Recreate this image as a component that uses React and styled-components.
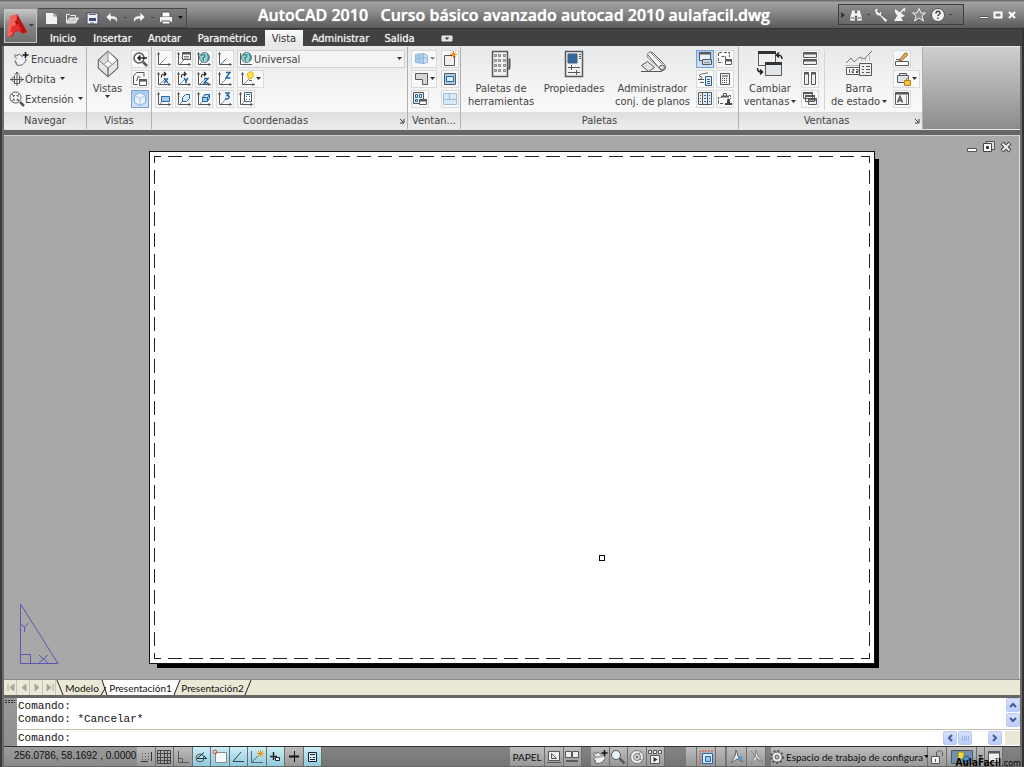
import React from "react";
import styled, { createGlobalStyle, css } from "styled-components";

const ui = '"DejaVu Sans Condensed", "Noto Sans", sans-serif';
const small = 'Lato, "Liberation Sans", sans-serif';

const Global = createGlobalStyle`
  * { box-sizing: border-box; }
  body { margin: 0; background: #5f5f5f; font-family: ${ui}; font-size: 11px; color: #444; }
  button, input, select { font: inherit; color: inherit; margin: 0; padding: 0; border: 0; background: none; }
  svg { display: block; flex: none; }
`;

const Window = styled.div`
  min-height: 100vh;
  display: flex;
  flex-direction: column;
  padding: 0 4px 1px;
  background: linear-gradient(90deg, #3c3c3c 0 2px, #6c6c6c 2px 4px, transparent 4px calc(100% - 4px), #6c6c6c calc(100% - 4px) calc(100% - 2px), #333 calc(100% - 2px)), #666764;
`;

/* ---------- title bar ---------- */
const TitleBar = styled.header`
  display: flex;
  align-items: center;
  height: 29px;
  margin: 0 -4px;
  padding: 0 6px 0 38px;
  background: linear-gradient(#5e5e5e, #a2a2a2 8%, #8b8b8b 40%, #5b5b5b 95%, #1f1f1f);
`;
const QuickAccess = styled.nav`
  display: flex;
  align-items: center;
  gap: 4px;
  width: 149px;
  height: 20px;
  margin-top: 6px;
  padding-left: 6px;
  border: 1px solid #484848;
  border-left: 0;
  background: linear-gradient(#7c7c7c, #626262);
`;
const BarButton = styled.button`
  display: flex;
  align-items: center;
  justify-content: center;
  width: ${(p) => p.$w || 16}px;
  height: 16px;
`;
const Title = styled.h1`
  flex: 1;
  margin: 0;
  padding-left: 71px;
  font: 600 16px/28px "Open Sans", sans-serif;
  color: #fff;
  text-shadow: 0 0 1px #fff;
  white-space: pre;
`;
const InfoCenter = styled.nav`
  display: flex;
  align-items: center;
  gap: 3px;
  height: 21px;
  width: 126px;
  padding: 0 2px;
  border: 1px solid #3e3e3e;
  background: linear-gradient(#8a8a8a, #666);
`;
const WindowButtons = styled.div`
  display: flex;
  align-items: center;
  gap: 2px;
  margin-left: 14px;
`;

/* ---------- ribbon ---------- */
const TabBar = styled.nav`
  position: relative;
  display: flex;
  align-items: flex-end;
  height: 17px;
  margin: 0 -2px;
  padding-left: 38px;
  background: #414141;
`;
const AppButton = styled.button`
  position: absolute;
  left: 2px;
  bottom: 3px;
  width: 33px;
  height: 34px;
  border: 1px solid #c4c4c4;
  background: linear-gradient(#c6c6c6, #858585 50%, #6f6f6f);
`;
const RibbonTab = styled.button`
  height: 16px;
  width: ${(p) => p.$w}px;
  line-height: 15px;
  color: #f4f4f4;
  text-shadow: 0 0 1px #ccc;
  ${(p) => p.$active && css`
    color: #2e2e2e;
    text-shadow: none;
    background: linear-gradient(#fafafa, #e4e4e4);
  `}
`;
const Ribbon = styled.section`
  display: flex;
  height: 84px;
  border-bottom: 1px solid #e4e4e4;
  border-top: 1px solid #e8e8e8;
  background: linear-gradient(#cfcfcf, #8c8c8c);
`;
const PanelBox = styled.section`
  display: flex;
  flex-direction: column;
  width: ${(p) => p.$w}px;
  border-right: 1px solid #b0b0b0;
  background: linear-gradient(#e8e9ea, #f4f4f5 50%, #fdfdfd);
`;
const PanelBody = styled.div`
  flex: 1;
  display: flex;
  gap: ${(p) => p.$gap || 0}px;
  padding: 3px ${(p) => p.$pr || 0}px 0 ${(p) => p.$pl || 0}px;
`;
const PanelTitle = styled.h2`
  display: flex;
  align-items: center;
  height: 17px;
  margin: 0;
  padding-right: ${(p) => (p.$arrow ? 2 : 0)}px;
  font: inherit;
  background: linear-gradient(#dedede, #ededed);
  span { flex: 1; text-align: center; }
`;
const Rows = styled.div`
  display: flex;
  flex-direction: column;
  gap: 2px;
`;
const Line = styled.div`
  display: flex;
  gap: ${(p) => p.$gap ?? 2}px;
`;
const Tool = styled.button`
  display: flex;
  align-items: center;
  justify-content: center;
  width: ${(p) => p.$w || 18}px;
  height: 18px;
  border: 1px solid #d9dadc;
  background: #f9f9fa;
  ${(p) => p.$on && css`
    border-color: #7aa2cf;
    background: linear-gradient(#a9ccf3, #cde3fa);
  `}
`;
const TextTool = styled.button`
  display: flex;
  align-items: center;
  gap: ${(p) => p.$gap}px;
  height: 18px;
  white-space: nowrap;
  svg:last-child { margin-left: 4px; }
`;
const BigTool = styled.button`
  display: flex;
  flex-direction: column;
  align-items: center;
  width: ${(p) => p.$w}px;
  height: 62px;
  line-height: 13px;
  svg + span { margin-top: ${(p) => p.$push || 2}px; }
  span { display: flex; align-items: center; gap: 2px; white-space: nowrap; }
`;
const Combo = styled.label`
  position: relative;
  display: flex;
  align-items: center;
  width: 168px;
  height: 18px;
  border: 1px solid #d0d1d3;
  background: #f4f4f5;
  select {
    flex: 1;
    height: 16px;
    appearance: none;
  }
  svg:last-child { margin-right: 2px; pointer-events: none; }
`;
const Split = styled.i`
  width: 1px;
  height: 60px;
  margin-left: 4px;
  background: #d4d4d4;
`;

/* ---------- drawing area ---------- */
const Canvas = styled.main`
  position: relative;
  flex: 1;
  display: flex;
  justify-content: center;
  min-height: 400px;
  margin-top: 5px;
  padding: 15px 145px 15px;
  border-top: 1px solid #d0d0d0;
  background: #a8a8a8;
  box-shadow: inset -1px 0 #e0e0e0;
`;
const Paper = styled.div`
  flex: 1;
  padding: 4px;
  border: 1px solid #111;
  background: #fff;
  box-shadow: 6px 6px 0 -2px #000;
`;
const dashX = "repeating-linear-gradient(90deg, #222 0 7px, transparent 7px 14px, #222 14px 21px)";
const dashY = "repeating-linear-gradient(180deg, #222 0 7px, transparent 7px 14px, #222 14px 21px)";
const Margins = styled.div`
  height: 100%;
  background:
    ${dashX} top / 100% 1px no-repeat,
    ${dashX} bottom / 100% 1px no-repeat,
    ${dashY} left / 1px 100% no-repeat,
    ${dashY} right / 1px 100% no-repeat;
`;
const DocButtons = styled.div`
  position: absolute;
  top: 3px;
  right: 6px;
  display: flex;
  gap: 1px;
`;
const Ucs = styled.svg`
  position: absolute;
  left: 15px;
  bottom: 14px;
`;
const Pick = styled.i`
  position: absolute;
  left: 595px;
  top: 419px;
  width: 6px;
  height: 6px;
  border: 1px solid #000;
`;

/* ---------- layout tabs ---------- */
const LayoutTabs = styled.nav`
  display: flex;
  height: 16px;
  border-top: 1px solid #8b8b80;
  background: #ebe8d7;
  font: 10px/14px ${small};
  color: #111;
`;
const Nav = styled.button`
  width: 13px;
  display: flex;
  align-items: center;
  justify-content: center;
  border-right: 1px solid #c8c5b8;
`;
const LayoutTab = styled.button`
  width: ${(p) => p.$w}px;
  white-space: nowrap;
  background: ${(p) => (p.$active ? "#fff" : "#ebe8d7")};
`;

/* ---------- command window ---------- */
const Command = styled.section`
  display: flex;
  height: 48px;
  margin-top: 3px;
  background: #fff;
  font: 11px/13px "Liberation Mono", monospace;
  color: #111;
`;
const Grip = styled.div`
  width: 13px;
  background: linear-gradient(#999, #8f8f8f);
`;
const CommandBody = styled.div`
  flex: 1;
  display: flex;
  flex-direction: column;
`;
const History = styled.div`
  display: flex;
  justify-content: space-between;
  height: 32px;
  padding-left: 1px;
  border-bottom: 1px solid #c3c2b0;
  pre { margin: 2px 0 0; font: inherit; }
`;
const Prompt = styled.div`
  flex: 1;
  display: flex;
  align-items: center;
  padding-left: 1px;
  input { flex: 1; min-width: 0; margin-left: 4px; outline: 0; }
`;
const VScroll = styled.div`
  display: flex;
  flex-direction: column;
  gap: 1px;
  width: 14px;
`;
const ScrollButton = styled.button`
  display: flex;
  align-items: center;
  justify-content: center;
  width: 14px;
  height: 14px;
  border: 1px solid #b9c9f2;
  border-radius: 2px;
  background: linear-gradient(#d7e1fd, #bccdf9);
`;
const HScroll = styled.div`
  display: flex;
  gap: 1px;
  padding-right: 3px;
  border-right: 15px solid #ebe8d7;
  button:last-child { margin-left: 15px; }
`;

/* ---------- status bar ---------- */
const Status = styled.footer`
  position: relative;
  display: flex;
  align-items: stretch;
  height: 20px;
  border-top: 1px solid #333;
  background: linear-gradient(#858585, #747474);
  font: 10px/18px ${small};
  color: #111;
`;
const Coords = styled.output`
  width: 133px;
  padding-left: 10px;
  font-family: "Liberation Sans", sans-serif;
  white-space: pre;
  background: linear-gradient(#9b9b9b, #8a8a8a);
`;
const Cells = styled.div`
  display: flex;
  width: ${(p) => p.$w}px;
  margin-left: ${(p) => p.$ml || 0}px;
`;
const Cell = styled.button`
  flex: ${(p) => (p.$w ? "none" : 1)};
  width: ${(p) => (p.$w ? p.$w + "px" : "auto")};
  display: flex;
  align-items: center;
  justify-content: center;
  gap: 1px;
  white-space: nowrap;
  border-right: 1px solid #6d6d6d;
  background: ${(p) => (p.$on ? "linear-gradient(#cfeef6, #8fcadb)" : "linear-gradient(#bdbdbd, #989898)")};
`;
const Spacer = styled.div`flex: 1;`;
const Watermark = styled.span`
  position: absolute;
  right: -1px;
  bottom: -3px;
  font: bold 10px/12px "DejaVu Sans Condensed", sans-serif;
  color: #050505;
  small { font-size: 9px; font-weight: normal; }
`;

/* ---------- icons ---------- */
const S = ({ w = 16, h = 16, vb, children, ...p }) => (
  <svg width={w} height={h} viewBox={vb || `0 0 ${w} ${h}`} fill="none" stroke="#585858" strokeWidth="1" aria-hidden="true" {...p}>{children}</svg>
);
const Down = ({ c = "#333" }) => <S w={5} h={4} stroke="none"><path d="M0 0h5L2.500 3z" fill={c} /></S>;
const Dash = () => <S w={3} h={3} stroke="none"><path d="M0 1h3v1H0z" fill="#444" /></S>;
const Globe = <><circle cx="8.500" cy="6.500" r="5" fill="#9fd3dc" stroke="#5d7b8c" /><path d="M5 5c1-2 4-2 4 0s-3 1-2 3 0 2 0 2" stroke="#3b9484" strokeWidth="1.500" /><path d="M11 3.500c2 1 2 4 0 6" stroke="#3b9484" strokeWidth="1.500" /></>;
const Axis = ({ children, blue }) => (
  <S>
    <path d="M3.500 13.500l6-6" stroke={blue ? "#3c6fa8" : "#888"} />
    <path d="M2.500 2v11.500H14" stroke="#555" />
    <path d="M1.500 3.500L2.500 1.500l1 2M12.500 12.500l2 1-2 1" stroke="#555" />
    {children}
  </S>
);
const Letter = ({ d }) => <path d={d} stroke="#2468a8" strokeWidth="1.500" />;
const turn = <path d="M5.500 6.500c-.500-3 1-3.500 4-3.500M8 1l2 2-2 2" stroke="#222" strokeWidth="1.200" />;
const X = "M8 7l4 5M12 7l-4 5";
const Y = "M8 7l2 3 2-3M10 9.500v3";
const Z = "M8 7.500h4l-4 4.500h4.500";

const coordIcons = [
  [
    ["Icono SCP", <Axis />],
    ["SCP con nombre", <Axis><path d="M6.500 1.500h8v7h-8z" fill="#fff" /><path d="M6 2.500h9" strokeWidth="2" /><path d="M8 5.500h5M8 7h5" stroke="#888" /></Axis>],
    ["SCP universal", <Axis>{Globe}</Axis>],
    ["Origen", <Axis blue />],
  ],
  [
    ["Girar X", <Axis>{turn}<Letter d={X} /></Axis>],
    ["Girar Y", <Axis>{turn}<Letter d={Y} /></Axis>],
    ["Girar Z", <Axis>{turn}<Letter d={Z} /></Axis>],
    ["Vector eje Z", <Axis><Letter d="M9 1.500h4L9 7h4.500" /></Axis>],
  ],
  [
    ["Vista", <Axis><path d="M5.500 5.500h8v5h-8z" fill="#a8cbed" stroke="#2468a8" /></Axis>],
    ["Objeto", <Axis><path d="M6.500 10.500v-4l3-3h4v4l-3 3z" fill="#dcecff" stroke="#2468a8" /></Axis>],
    ["Cara", <Axis><path d="M6.500 6.500l2-3h5v4l-2 3h-5zM6.500 6.500h5l2-3M11.500 6.500v4" fill="#a8cbed" stroke="#2468a8" /></Axis>],
    ["Tres puntos", <Axis><Letter d="M8 2h4L10 4.500c4 0 2 5-2 3" /></Axis>],
  ],
];
const NamedUcs = <Axis><path d="M6.500 1.500h7v9h-7z" fill="#fff" /><path d="M8 3.500h4M8 5.500h1M11 5.500h1M8 8.500h1M11 8.500h1" stroke="#2468a8" /></Axis>;
const Bulb = <Axis><path d="M7.500 4a3 3 0 1 1 5 2l-1 1.500H9L8 6z" fill="#ffe74a" stroke="#e3b112" /><path d="M9 9.500h3" /></Axis>;

const Hand = <S><path d="M3.500 7.500L1.500 5c0-2 2-1 3 0 0-2 2-2 3-1l2 2M12 8c2 0 1 2 0 3-2 3-5 4-8 3-2-1-1-2 0-2-2 0-3-2-1-2.500" fill="#f2f2f2" /><path d="M12.500 1v6M9.500 4h6" stroke="#111" strokeWidth="1.500" /></S>;
const Orbit = <S><path d="M8 1v14M1 8.500h14M6 3.500L8 1l2 2.500" /><path d="M5.500 4.500v8h5v-8M10 6c5 1 5 4 0 5M6 6C1 7 1 10 6 11" /></S>;
const Extents = <S><circle cx="6.500" cy="6.500" r="5.500" fill="#f4f4f4" /><path d="M11 11l4 4" strokeWidth="2.500" /><path d="M4.500 6V4.500H6M7.500 4.500H9V6M4.500 7.500V9H6M9 7.500V9H7.500M3 3l2 2M10 3L8 5M3 10l2-2M10 10L8 8" /></S>;
const ViewCube = (
  <S w={22} h={28}>
    <path d="M11 1.500L20.500 10v8L11 26.500 1.500 18v-8z" fill="#f7f7f7" strokeWidth="1.500" />
    <path d="M11 1.500V11l-9 7v-8z" fill="#dadcde" stroke="#999" />
    <path d="M11 1.500V11l9 7v-8z" fill="#fff" stroke="#999" />
    <path d="M1.500 10l9.500 8v8.500L1.500 18zM20.500 10L11 18v8.500l9.500-8.500z" fill="#e4e6e8" stroke="#777" />
  </S>
);
const PrevView = <S><circle cx="7" cy="7" r="5" fill="#fff" strokeWidth="1.500" /><path d="M11 11l4 4" strokeWidth="2.500" /><path d="M15 7H6M8.500 4.500L6 7l2.500 2.500" stroke="#222" strokeWidth="1.500" /></S>;
const NamedView = <S><path d="M1.500 13.500V5l3-3.500H12v4M1.500 13.500h4M4.500 10l2-5 2 2" /><path d="M7.500 8.500h7v6h-7z" fill="#fff" /><path d="M7 9.500h8" strokeWidth="2" /></S>;
const SoftCube = <S><path d="M8 1.500l5.500 3v7l-5.500 3-5.500-3v-7z" fill="#eaf4fd" stroke="#8fb0d0" /><path d="M2.500 4.500L8 7.500l5.500-3M8 7.500v7" stroke="#a5c3de" /></S>;

const VpCube = <S><path d="M1.500 3.500l8-1v10l-8-1z" fill="#a8cdeb" stroke="#8fb8da" /><path d="M9.500 2.500l4 2v7l-4 1zM1 7h12M5 3v9" fill="#cbe2f4" stroke="#8fb8da" /></S>;
const VpNew = <S><path d="M2.500 4.500h10v10h-10z" fill="#f0f0f0" /><path d="M11.500 0v7M8 3.500h7M9.500 1.500l4 4M13.500 1.500l-4 4" stroke="#ee8b1c" /></S>;
const VpPoly = <S><path d="M1.500 2.500h12v11h-5v-5h-7z" fill="#d4d7da" /></S>;
const VpClip = <S><path d="M2.500 2.500h11v11h-11z" fill="#a8cbed" /><path d="M4.500 5.500h7v5h-7z" fill="#dcecff" stroke="#2468a8" /></S>;
const VpNamed = <S><path d="M1.500 1.500h10v11h-10z" fill="#e4edf5" /><path d="M3.500 3.500h2v3h-2zM7.500 3.500h2v3h-2zM3.500 8.500h2v2h-2z" stroke="#2468a8" /><path d="M7.500 8.500h7v5h-7z" fill="#fff" /><path d="M7 9.500h8" strokeWidth="2" /></S>;
const VpJoin = <S><path d="M1.500 2.500h13v11h-13z" fill="#d8eaf7" stroke="#9fbdd2" /><path d="M1.500 8.500h13M7.500 2.500v6" stroke="#9fbdd2" /></S>;

const ToolPalettes = (
  <S w={24} h={28}>
    <path d="M3.500 1.500h15v25h-15z" fill="#f0f1f2" strokeWidth="1.500" />
    {[4, 9, 14, 19].map((y) => [5, 9, 14].map((x) => <path key={`${x}-${y}`} d={`M${x + 0.5} ${y + 0.5}h2v2h-2z`} fill="#ccc" stroke="#888" />))}
    <path d="M19.500 9.500h1v8l-1 2" strokeWidth="2" />
  </S>
);
const Properties = (
  <S w={24} h={28}>
    <path d="M3.500 1.500h17v25h-17z" fill="#f0f1f2" strokeWidth="1.500" />
    <path d="M6 4h9v9H6z" fill="#35689c" stroke="#3a5f88" />
    <path d="M17 4.500h2M17 6.500h2M17 8.500h2M6 17.500h12M6 22.500h12M9.500 15v5M14.500 20v5" />
  </S>
);
const SheetSet = (
  <S w={28} h={28}>
    <path d="M2.500 15.500l6-4 7 6-6 4zM2 21.500h21" fill="#e3e4e6" />
    <path d="M8.500 4.500c1-3 4-3 6-1l11 11c3 4-1 8-4 5z" fill="#f6f6f7" />
    <path d="M8.500 4.500c-1 2 0 3 1 4l12 11M12 3l11 11" stroke="#888" />
    <circle cx="23" cy="17.500" r="2.500" fill="#ddd" />
  </S>
);
const PalCommand = <S><path d="M2.500 1.500h11v8h-11z" fill="#eaf2fb" /><path d="M2 2.500h12" strokeWidth="2" /><path d="M5.500 8.500h9v5h-9z" fill="#c9d5e2" /><path d="M7 11.500h6" stroke="#8aa0b5" /></S>;
const PalDesign = <S><path d="M1.500 5V1.500h4M7 1.500h5.500V6M1.500 7v4.500h4M4.500 5.500h4v3" strokeDasharray="3 1" /><path d="M8.500 8.500h6v5h-6z" fill="#fff" /><path d="M8 9.500h7" strokeWidth="2" /></S>;
const PalMarkup = <S><path d="M2 4.500c3-3 6-1 9-3M2 4.500l3 2M1 8.500h6M3 11.500h4M3 8.500l2-2" /><path d="M8.500 5.500h6v9h-6z" fill="#e5f0fa" stroke="#34597d" /><path d="M10 8.500h3M10 10.500h3M10 12.500h3" stroke="#2468a8" /></S>;
const Calc = <S><path d="M3.500 2.500h9v11h-9z" fill="#f2f2f2" /><path d="M5 5h6" strokeWidth="2" stroke="#999" /><path d="M5 7.500h6M5 9.500h6M5 11.500h6" strokeDasharray="1 1" /></S>;
const PalSheet = <S><path d="M1.500 1.500h13v12h-13z" fill="#e4ebf2" /><path d="M5.500 2v12M10.500 2v12M3 4.500h1M3 7.500h1M3 10.500h1" /><path d="M7 4.500h2M7 7.500h2M7 10.500h2M12 4.500h1M12 7.500h1M12 10.500h1" stroke="#2468a8" /></S>;
const PalRef = <S><path d="M1.500 12.500v-6h3M12 4.500h1.500V8M3 12.500h3" strokeDasharray="3 1" /><path d="M6.500 5V2.500h3V5" /><path d="M4 5.500h8" strokeWidth="2" /><circle cx="11.500" cy="9" r="1.500" fill="#444" stroke="none" /><path d="M8 14h7v-2h-2v-2h-3v2H8z" fill="#444" stroke="none" /></S>;
const SwitchWin = (
  <S w={28} h={28}>
    <path d="M2.500 2.500h17v13h-17z" fill="#eef0f2" /><path d="M2 2.500h18" stroke="#333" strokeWidth="3" />
    <path d="M9.500 12.500h16v13h-16z" fill="#e2e6ea" /><path d="M9 13.500h17" stroke="#333" strokeWidth="3" />
    <path d="M26 9c0-3-1-4-5-4M23 2.500L20.500 5 23 7.500M1.500 18c0 4 2 4 5 4M4 19.500L6.500 22 4 24.500" stroke="#222" strokeWidth="1.500" />
  </S>
);
const TileH = <S><path d="M1.500 1.500h13v5h-13zM1.500 8.500h13v5h-13z" fill="#eee" /><path d="M1 2.500h14M1 9.500h14" strokeWidth="2" /></S>;
const TileV = <S><path d="M2.500 1.500h4v12h-4zM9.500 1.500h4v12h-4z" fill="#eee" /><path d="M2 2.500h5M9 2.500h5" strokeWidth="2" /></S>;
const Cascade = <S><path d="M1.500 1.500h9v6h-9zM3.500 4.500h9v6h-9zM6.500 7.500h8v6h-8z" fill="#eee" /><path d="M1 2h10M3 5h10M6 8.500h9" strokeWidth="2" /></S>;
const StatusBarIcon = (
  <S w={28} h={28}>
    <path d="M1 13l5-5 3 4 6-5 4 2 8-8" stroke="#777" /><path d="M1 15.500h14M16.500 11V8M20.500 11V8M24.500 11V5" stroke="#bbb" />
    <path d="M1.500 17.500h14v7h-14z" fill="#fff" /><path d="M4.500 19v4M7 19.500h2v1.500H7v1.500h2M11 19.500h2v3h-2M11 21.500h2" />
    <path d="M14.500 13.500h12v12h-12z" fill="#eceded" /><path d="M17 16.500h2M21 16.500h4M17 19.500h2M21 19.500h4M17 22.500h2M21 22.500h4" />
  </S>
);
const Pencil = <S><path d="M1.500 10.500h13v4h-13z" fill="#fff" /><path d="M5.500 8.500l6-7 2.500 2-6 6-3 .500z" fill="#f0a94a" stroke="#8a6a3a" /><path d="M2 8.500h4" /></S>;
const LockBar = <S><path d="M1.500 4.500h11v7h-11zM3.500 4V2.500h7V4" fill="#dfe3e8" /><path d="M8.500 9.500h6v5h-6z" fill="#f5c63c" stroke="#b28420" /><path d="M10.500 9V7.500h2V9" stroke="#b28420" /></S>;
const TextWin = <S><path d="M1.500 1.500h13v12h-13z" fill="#f4f4f4" /><path d="M1 2.500h14" strokeWidth="2" /><path d="M3.500 11.500l2.500-6 2.500 6M4.500 9.500h3" strokeWidth="1.500" /><path d="M12.500 4v9" stroke="#999" /></S>;

const light = "#f2f2f2";
const quick = [
  ["Nuevo", <S><path d="M2 3h8l3 3v8H2z" fill={light} stroke="none" /><path d="M10 3v3h3" stroke="#777" /></S>],
  ["Abrir", <S><path d="M2.500 12.500v-8h3l1 1h5v2" stroke={light} /><path d="M2.500 13l3-5h9l-3 5z" fill="#ccc" stroke={light} /></S>],
  ["Guardar", <S><path d="M3 3h11v11H3z" fill="#f0f0f5" stroke="#3f4666" /><path d="M5 8h7v3H5z" fill="#3f4a83" stroke="none" /><path d="M5 4.500h7M6 13h4" stroke="#667" /></S>],
  ["Deshacer", <S><path d="M7 2v4c6-1 8 4 5 8 1-4-1-5-5-5v3L2 7z" fill={light} stroke="#555" strokeWidth=".500" /></S>],
  null,
  ["Rehacer", <S><path d="M9 2v4C3 5 1 10 4 14c-1-4 1-5 5-5v3l5-5z" fill={light} stroke="#555" strokeWidth=".500" /></S>],
  null,
  ["Imprimir", <S><path d="M4 2h8v5H4z" fill="#fff" stroke="#555" /><path d="M2 7h12v5H2z" fill={light} stroke="none" /><path d="M4 11h8v3H4z" fill="#fff" stroke="#555" /></S>],
];
const info = [
  ["Buscar", <S><path d="M4 3h3v3h2V3h3l2 7v4H9V9H7v5H2v-4z" fill={light} stroke="#555" strokeWidth=".500" /><path d="M3 11h3M10 11h3" /></S>],
  null,
  ["Suscripción", <S><path d="M2 5c-1-3 1-4 4-3.500L4 4l2 2 2.500-2c.500 2 0 3-.500 4l6.500 5-2 2.500L7 9C4 9 3 8 2 5z" fill={light} stroke="#555" strokeWidth=".500" /></S>],
  ["Comunicaciones", <S><path d="M3 2c-1 6 5 10 10 7zM5 9l-3 5h9l-2-4" fill={light} stroke="none" /><path d="M8 6l5-5M11 2l2 2" stroke={light} strokeWidth="1.500" /></S>],
  ["Favoritos", <S><path d="M8 1.500l2 4.500h4.500l-3.500 3 1.500 5L8 11l-4.500 3L5 9 1.500 6H6z" fill="#888" stroke={light} /></S>],
  ["Ayuda", <S><circle cx="8" cy="8" r="6.500" fill={light} stroke="#555" /><path d="M6 6.500c0-3 4-3 4-.500 0 1.500-2 1.500-2 3M8 10.500V12" stroke="#444" strokeWidth="1.500" /></S>],
];
const WinMin = <S w={12} h={12}><path d="M1.500 7.500h9v2h-9z" fill="#fff" /></S>;
const WinMax = <S w={12} h={12}><path d="M2.500 3.500h7v5h-7z" stroke="#fff" strokeWidth="2" /></S>;
const WinClose = <S w={12} h={12}><path d="M3 3l6 6M9 3L3 9" stroke="#fff" strokeWidth="2" /></S>;
const Logo = (
  <S w={31} h={32} stroke="none">
    <path d="M12 4l10 18-4 2-4-3-4 1-2 4-5 1-1-4z" fill="#d42020" />
    <path d="M12 4L5 6 2 24l1 3 4-2 4-11z" fill="#f0645c" /><path d="M12 4l10 18-5 1-5-13z" fill="#b81414" />
    <path d="M7 16l7-1 2 5-11 2z" fill="#e1302a" /><path d="M10 13l1-3 2 4z" fill="#7c0c0c" />
    <path d="M24 14h5l-2.500 3z" fill="#444" />
  </S>
);

const statusLeft = [
  ["Forzcursor", 0, <S><path d="M4.500 4v8M7.500 4v8M10.500 4v8" strokeDasharray="1 2" /><path d="M3 12.500h7M13.500 3v9" stroke="#333" /></S>],
  ["Rejilla", 0, <S><path d="M1.500 1.500h13v13h-13zM4.500 1v14M8.500 1v14M11.500 1v14M1 4.500h14M1 8.500h14M1 11.500h14" stroke="#444" /></S>],
  ["Orto", 0, <S><path d="M3.500 2v11.500H14M3.500 9.500h4v4" /></S>],
  ["Polar", 1, <S><circle cx="7" cy="9" r="4" /><path d="M4 9.500l7-6M4 9.500h10M11 7l2.500 2.500" stroke="#234" /></S>],
  ["Refent", 1, <S><path d="M3.500 3.500h11v10h-11z" fill="#f4f9fb" stroke="#888" /><circle cx="3" cy="3" r="2" stroke="#e04a36" /></S>],
  ["Rastreo", 1, <S><path d="M11 3L3 12.500h11" stroke="#345" /></S>],
  ["SCPD", 1, <S><path d="M2.500 2v11.500H14M3 13l7-7" stroke="#567" /><path d="M11.500 1v7M8 4.500h7M9 2l5 5M14 2L9 7" stroke="#e79a1c" /></S>],
  ["Din", 1, <S><path d="M6.500 3v8M3 7.500h7" stroke="#222" strokeWidth="1.500" /><path d="M8.500 8.500h4v3h-4z" fill="#eef" stroke="#222" /></S>],
  ["Grosor", 0, <S><path d="M8.500 2v11" stroke="#111" /><path d="M3 7.500h10" stroke="#111" strokeWidth="2" /></S>],
  ["Propiedades rápidas", 1, <S><path d="M4.500 3.500h8v9h-8z" fill="#dfeaf4" stroke="#123" /><path d="M6 5.500h5M6 8.500h1M9 8.500h2M6 10.500h5" stroke="#123" /></S>],
];
const Scroll = ({ d, label }) => <ScrollButton aria-label={label}><S w={8} h={8}><path d={d} stroke="#3f5c95" strokeWidth="2" /></S></ScrollButton>;
const navGlyphs = [["Primera", "M2 1v7M8 1L4 4.500 8 8z"], ["Anterior", "M7 1L3 4.500 7 8z"], ["Siguiente", "M3 1l4 3.500L3 8z"], ["Última", "M8 1v7M2 1l4 3.500L2 8z"]];

const Panel = ({ w, title, arrow, children, ...p }) => (
  <PanelBox $w={w}>
    <PanelBody {...p}>{children}</PanelBody>
    <PanelTitle $arrow={arrow}><span>{title}</span>{arrow && <S w={6} h={6}><path d="M1 1l3 3M5 1v4H1" stroke="#333" /></S>}</PanelTitle>
  </PanelBox>
);
const T = ({ label, children, ...p }) => <Tool aria-label={label} {...p}>{children}</Tool>;

const tabs = [["Inicio", 46], ["Insertar", 53], ["Anotar", 51], ["Paramétrico", 75], ["Vista", 38], ["Administrar", 75], ["Salida", 43]];

export default function App() {
  return (
    <Window>
      <Global />
      <TitleBar>
        <QuickAccess>
          {quick.map((q, i) => (q ? <BarButton key={i} aria-label={q[0]}>{q[1]}</BarButton> : <Dash key={i} />))}
          <Down c="#111" />
        </QuickAccess>
        <Title>{"AutoCAD 2010   Curso básico avanzado autocad 2010 aulafacil.dwg"}</Title>
        <InfoCenter>
          <S w={4} h={6} stroke="none"><path d="M0 0l4 3-4 3z" fill="#333" /></S>
          {info.map((q, i) => (q ? <BarButton key={i} aria-label={q[0]}>{q[1]}</BarButton> : <Dash key={i} />))}
          <Dash />
        </InfoCenter>
        <WindowButtons>
          <BarButton $w={12} aria-label="Minimizar">{WinMin}</BarButton>
          <BarButton $w={12} aria-label="Maximizar">{WinMax}</BarButton>
          <BarButton $w={12} aria-label="Cerrar">{WinClose}</BarButton>
        </WindowButtons>
      </TitleBar>

      <TabBar>
        <AppButton aria-label="Menú de la aplicación">{Logo}</AppButton>
        {tabs.map(([t, w]) => <RibbonTab key={t} $w={w} $active={t === "Vista"}>{t}</RibbonTab>)}
        <BarButton $w={52} aria-label="Minimizar cinta"><S w={12} h={8}><path d="M1 2h10v5H1z" fill="#ddd" stroke="#eee" /><path d="M4 3.500h4L6 6z" fill="#333" stroke="none" /></S></BarButton>
      </TabBar>

      <Ribbon>
        <Panel w={83} title="Navegar" $pl={5}>
          <Rows>
            <TextTool $gap={2}>{Hand}Encuadre</TextTool>
            <TextTool $gap={0}>{Orbit}Órbita<Down /></TextTool>
            <TextTool $gap={0}>{Extents}Extensión<Down /></TextTool>
          </Rows>
        </Panel>
        <Panel w={65} title="Vistas" $gap={3}>
          <BigTool $w={41} $push={4}>{ViewCube}<span>Vistas</span><Down /></BigTool>
          <Rows>
            <T label="Vista previa">{PrevView}</T>
            <T label="Vistas guardadas">{NamedView}</T>
            <T label="Estilos visuales" $on>{SoftCube}</T>
          </Rows>
        </Panel>
        <Panel w={256} title="Coordenadas" arrow $pl={3}>
          <Rows>
            {coordIcons.map((row, i) => (
              <Line key={i} $gap={3}>
                <Line>{row.slice(0, 3).map(([l, ic]) => <T key={l} label={l}>{ic}</T>)}</Line>
                <T label={row[3][0]}>{row[3][1]}</T>
                {i === 0 && <Combo><S>{Globe}<path d="M2.500 2v11.500H14" /></S><select aria-label="SCP"><option>Universal</option></select><Down /></Combo>}
                {i === 1 && <T label="Mostrar icono SCP" $w={27}>{Bulb}<Down /></T>}
                {i === 2 && <T label="SCP guardados">{NamedUcs}</T>}
              </Line>
            ))}
          </Rows>
        </Panel>
        <Panel w={53} title="Ventan..." $pl={3}>
          <Rows>
            <Line $gap={4}><T label="Vista de ventana" $w={26}>{VpCube}<Down c="#888" /></T><T label="Nueva">{VpNew}</T></Line>
            <Line $gap={4}><T label="Poligonal" $w={26}>{VpPoly}<Down /></T><T label="Delimitar">{VpClip}</T></Line>
            <Line $gap={12}><T label="Ventanas guardadas">{VpNamed}</T><T label="Unir">{VpJoin}</T></Line>
          </Rows>
        </Panel>
        <Panel w={278} title="Paletas" $pl={2}>
          <BigTool $w={76} $push={4}>{ToolPalettes}<span>Paletas de</span><span>herramientas</span></BigTool>
          <BigTool $w={70} $push={4}>{Properties}<span>Propiedades</span></BigTool>
          <BigTool $w={87} $push={4}>{SheetSet}<span>Administrador</span><span>conj. de planos</span></BigTool>
          <Rows>
            <Line><T label="Línea de comandos" $on>{PalCommand}</T><T label="DesignCenter">{PalDesign}</T></Line>
            <Line><T label="Marcas">{PalMarkup}</T><T label="Calculadora">{Calc}</T></Line>
            <Line><T label="Capas">{PalSheet}</T><T label="Referencias">{PalRef}</T></Line>
          </Rows>
        </Panel>
        <Panel w={184} title="Ventanas" arrow $pl={1} $gap={1}>
          <BigTool $w={60} $push={4}>{SwitchWin}<span>Cambiar</span><span>ventanas<Down /></span></BigTool>
          <Rows>
            <T label="Mosaico horizontal">{TileH}</T>
            <T label="Mosaico vertical">{TileV}</T>
            <T label="Cascada">{Cascade}</T>
          </Rows>
          <Split />
          <BigTool $w={66} $push={4}>{StatusBarIcon}<span>Barra</span><span>de estado<Down /></span></BigTool>
          <Rows>
            <T label="Barras de herramientas">{Pencil}</T>
            <T label="Bloquear" $w={27}>{LockBar}<Down /></T>
            <T label="Ventana de texto">{TextWin}</T>
          </Rows>
        </Panel>
      </Ribbon>

      <Canvas>
        <Paper><Margins /></Paper>
        <DocButtons>
          <BarButton aria-label="Minimizar dibujo"><S w={14} h={14}><path d="M2.500 8.500h9v3h-9z" fill="#fff" stroke="#555" /></S></BarButton>
          <BarButton aria-label="Restaurar dibujo"><S w={14} h={14}><path d="M4.500 1.500h8v8h-8z" fill="#ddd" stroke="#555" /><path d="M1.500 3.500h8v8h-8z" fill="#fff" stroke="#444" /><path d="M4.500 6.500h2v2h-2z" fill="#333" stroke="#333" /></S></BarButton>
          <BarButton aria-label="Cerrar dibujo"><S w={14} h={14}><path d="M3 3l8 8M11 3l-8 8" stroke="#444" strokeWidth="4" /><path d="M3.500 3.500l7 7M10.500 3.500l-7 7" stroke="#eee" strokeWidth="2" /></S></BarButton>
        </DocButtons>
        <Ucs width="40" height="62" viewBox="0 0 40 62" fill="none" stroke="#5b57b0">
          <path d="M1.500 1v59.500H39zM1.500 51.500h10v9M20 52l9 8M29 52l-9 8M1.500 21l4 3 4-4M5.500 24v5" />
        </Ucs>
        <Pick />
      </Canvas>

      <LayoutTabs>
        {navGlyphs.map(([l, d]) => <Nav key={l} aria-label={l}><S w={9} h={9}><path d={d} fill="#aaa89c" stroke="#aaa89c" /></S></Nav>)}
        <S w={8} h={15}><path d="M1 0l6 15" stroke="#222" /></S>
        <LayoutTab $w={36}>Modelo</LayoutTab>
        <S w={8} h={15}><path d="M2 0h6v15H7z" fill="#fff" stroke="none" /><path d="M2 0l5 15M6 7L1 15" stroke="#222" /></S>
        <LayoutTab $w={65} $active>Presentación1</LayoutTab>
        <S w={8} h={15}><path d="M0 0h7L1 15H0z" fill="#fff" stroke="none" /><path d="M7 0L1 15" stroke="#222" /></S>
        <LayoutTab $w={63}>Presentación2</LayoutTab>
        <S w={8} h={15}><path d="M7 0L1 15" stroke="#222" /></S>
      </LayoutTabs>

      <Command>
        <Grip><S w={13} h={6}><path d="M1 2.500h10M1 4.500h10" stroke="#333" strokeDasharray="2 1" /></S></Grip>
        <CommandBody>
          <History>
            <pre>{"Comando:\nComando: *Cancelar*"}</pre>
            <VScroll><Scroll label="Arriba" d="M1 6l3-3 3 3" /><Scroll label="Abajo" d="M1 2l3 3 3-3" /></VScroll>
          </History>
          <Prompt>
            <label htmlFor="cmd">Comando:</label>
            <input id="cmd" />
            <HScroll>
              <Scroll label="Izquierda" d="M6 1L3 4l3 3" />
              <ScrollButton aria-label="Desplazar"><S w={8} h={8}><path d="M1.500 2v5M3.500 2v5M5.500 2v5M7.500 2v5" stroke="#9db3e6" /></S></ScrollButton>
              <Scroll label="Derecha" d="M2 1l3 3-3 3" />
            </HScroll>
          </Prompt>
        </CommandBody>
      </Command>

      <Status>
        <Coords>256.0786, 58.1692 , 0.0000</Coords>
        <Cells $w={185}>{statusLeft.map(([l, on, ic]) => <Cell key={l} $on={on} aria-label={l}>{ic}</Cell>)}</Cells>
        <Spacer />
        <Cells $w={72}>
          <Cell $w={35}>PAPEL</Cell>
          <Cell aria-label="Presentación"><S><path d="M2.500 2.500h11v9h-11z" fill="#eee" /><path d="M5.500 4.500v5h5zM1 13.500h14" /></S></Cell>
          <Cell aria-label="Vista rápida"><S><path d="M1.500 2.500h6v6h-6zM8.500 2.500h6v6h-6z" fill="#eee" /><path d="M2 12h12" strokeWidth="2" /></S></Cell>
        </Cells>
        <Cells $w={74} $ml={9}>
          <Cell aria-label="Encuadre">{Hand}</Cell>
          <Cell aria-label="Zoom"><S><circle cx="6" cy="6" r="4.500" fill="#e4f4f8" /><path d="M9.500 9.500l5 5" strokeWidth="2.500" /></S></Cell>
          <Cell aria-label="Rueda"><S><circle cx="8" cy="8" r="6.500" fill="#eee" stroke="#777" /><circle cx="8" cy="8" r="3.500" fill="#ddd" stroke="#777" /><circle cx="8" cy="8" r="1" /><path d="M12 2l-2 3M13 11l-3-1" stroke="#777" /></S></Cell>
          <Cell aria-label="ShowMotion"><S><path d="M1.500 1.500h3v3h-3zM6.500 1.500h3v3h-3zM11.500 1.500h3v3h-3zM3.500 6.500h9v8h-9z" fill="#eee" /><path d="M6.500 8l4 2.500-4 2.500z" fill="#333" stroke="none" /></S></Cell>
        </Cells>
        <Cells $w={40} $ml={21}>
          <Cell $w={11} aria-hidden="true" tabIndex={-1} />
          <Cell aria-label="Maximizar ventana"><S><path d="M2 15V2h13" stroke="#e0503d" strokeDasharray="2 1" /><path d="M4.500 4.500h10v10h-10z" fill="#dcecff" stroke="#2468a8" /><path d="M7.500 7.500h5v5h-5z" fill="#9fc4ea" stroke="#2468a8" /></S></Cell>
          <Cell $w={10} aria-hidden="true" tabIndex={-1} />
        </Cells>
        <Cells $w={39} $ml={1}>
          <Cell aria-label="Visibilidad de anotación"><S><path d="M8 1l2 6 5 6-6-3-6 4 4-7z" fill="#eee" stroke="#666" /><circle cx="12" cy="9" r="2" fill="#4d94d8" stroke="none" /></S></Cell>
          <Cell aria-label="Escala automática"><S><path d="M8 1l2 6 5 6-6-3-6 4 4-7z" fill="#ddd" stroke="#888" /><path d="M3 2l10 12" stroke="#888" /></S></Cell>
        </Cells>
        <Cells $w={176} $ml={5}>
          <Cell $w={157}>
            <S><circle cx="8" cy="8" r="6" stroke="#555" strokeDasharray="2 2" strokeWidth="2" /><circle cx="8" cy="8" r="5" fill="#eee" stroke="#666" /><circle cx="8" cy="8" r="2" fill="#bbb" /></S>
            Espacio de trabajo de configura<Down c="#111" />
          </Cell>
          <Cell aria-label="Bloquear interfaz"><S><path d="M2.500 7.500h8v7h-8z" fill="#eee" /><path d="M7.500 7V4c0-3 6-3 6 0v3M6.500 10v3" /></S></Cell>
        </Cells>
        <Cells $w={73}>
          <Cell $w={30} aria-label="Bandeja"><S w={24}><path d="M1.500 1.500h21v13h-21z" fill="#6d8fb8" /><path d="M8 3h6v4h3v3h-6v3H8z" fill="#f2d63b" stroke="#8b8430" /><circle cx="16" cy="10" r="3" fill="#4f8fd0" stroke="#2d5f97" /></S></Cell>
          <Cell $w={8} aria-label="Menú"><Down /></Cell>
          <Cell $w={18} aria-label="Limpiar pantalla"><S><path d="M2.500 2.500h11v11h-11z" fill="#eee" /><path d="M2 3.500h12" strokeWidth="2" /></S></Cell>
        </Cells>
        <Watermark>AulaFacil<small>.com</small></Watermark>
      </Status>
    </Window>
  );
}
